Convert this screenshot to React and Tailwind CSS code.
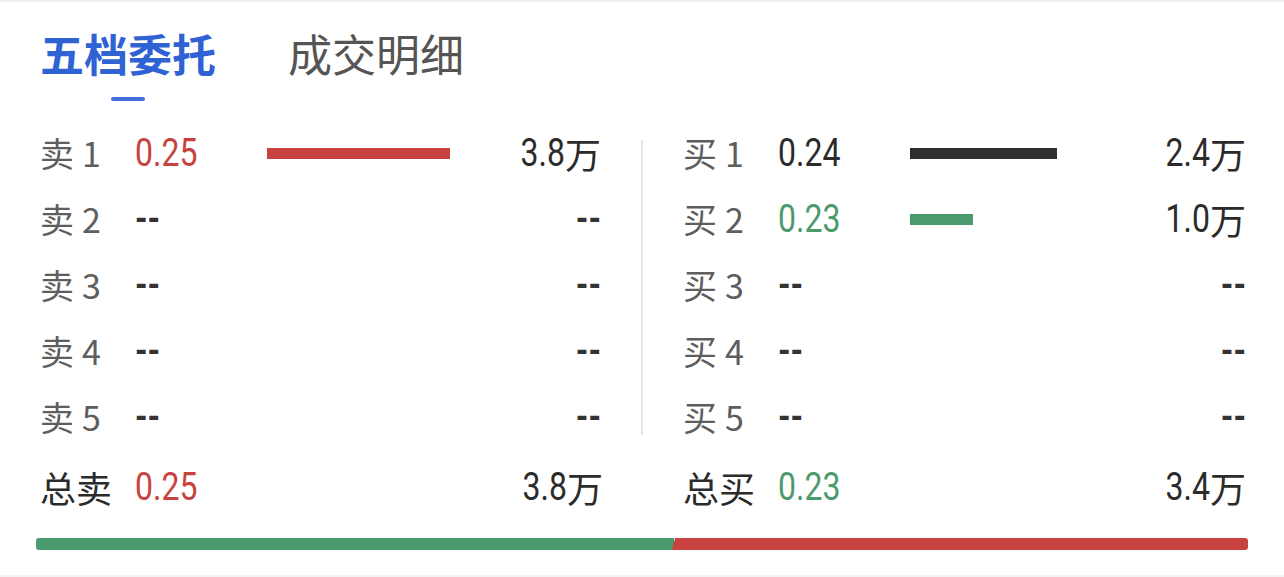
const RED = "text-[#c8423f]";
const GREEN = "text-[#4a9a6d]";

const sells = [
  { n: 1, price: "0.25", priceCls: RED, vol: "3.8", bar: 183, barCls: "bg-[#c8423f]" },
  { n: 2 },
  { n: 3 },
  { n: 4 },
  { n: 5 },
];

const buys = [
  { n: 1, price: "0.24", priceCls: "text-[#2b2b2b]", vol: "2.4", bar: 147, barCls: "bg-[#2e2e2e]" },
  { n: 2, price: "0.23", priceCls: GREEN, vol: "1.0", bar: 63, barCls: "bg-[#4a9a6d]" },
  { n: 3 },
  { n: 4 },
  { n: 5 },
];

// numbers in the picture use a narrow face; Roboto stretched vertically stands in for it
const NUM = "inline-block scale-y-[1.2] font-['Roboto','Noto_Sans_CJK_SC',sans-serif] text-[32px] leading-none";
const CJK = "font-['Noto_Sans_CJK_SC',sans-serif]";

const Dash = () => <span className={`${NUM} font-bold text-[#333]`}>--</span>;

const Volume = ({ vol }) =>
  vol ? (
    <span className="flex items-center text-[#2b2b2b]">
      <span className={NUM}>{vol}</span>
      <span className={`${CJK} text-[36px] leading-none`}>万</span>
    </span>
  ) : (
    <Dash />
  );

const Row = ({ side, row }) => (
  <div className="flex h-[66px] items-center">
    <div className={`${CJK} w-[95px] text-[34px] leading-none text-[#5e5e5e]`}>
      {side}
      <span className="ml-[8px]">{row.n}</span>
    </div>
    <div className="w-[132px]">
      {row.price ? <span className={`${NUM} ${row.priceCls}`}>{row.price}</span> : <Dash />}
    </div>
    <div className="flex-1">
      {row.bar && <div className={`h-[11px] ${row.barCls}`} style={{ width: row.bar }} />}
    </div>
    <Volume vol={row.vol} />
  </div>
);

const Total = ({ label, price, priceCls, vol }) => (
  <div className="flex flex-1 items-center">
    <div className={`${CJK} w-[95px] text-[36px] leading-none text-[#2b2b2b]`}>{label}</div>
    <span className={`${NUM} ${priceCls}`}>{price}</span>
    <div className="flex-1" />
    <Volume vol={vol} />
  </div>
);

export default function App() {
  return (
    <div className="flex h-[577px] w-[1284px] flex-col border-t-2 border-[#f2f2f2] bg-white">
      {/* tabs */}
      <div className="mt-[29px] flex gap-[72px] pl-[40px]">
        <div className="flex flex-col items-center">
          <span className={`${CJK} text-[44px] leading-[44px] font-bold text-[#2f62d3]`}>五档委托</span>
          <div className="mt-[22px] h-[4px] w-[34px] rounded-full bg-[#3f6fd8]" />
        </div>
        <span className={`${CJK} text-[44px] leading-[44px] text-[#555]`}>成交明细</span>
      </div>

      {/* order book */}
      <div className="mt-[19px] flex pl-[40px] pr-[38px]">
        <div className="w-[561px]">
          {sells.map((r) => (
            <Row key={r.n} side="卖" row={r} />
          ))}
        </div>
        <div className="mx-[40px] mt-[20px] mb-[15px] w-[2px] bg-[#e6e6e6]" />
        <div className="flex-1">
          {buys.map((r) => (
            <Row key={r.n} side="买" row={r} />
          ))}
        </div>
      </div>

      {/* totals */}
      <div className="flex h-[74px] pl-[40px] pr-[38px]">
        <div className="flex w-[563px]">
          <Total label="总卖" price="0.25" priceCls={RED} vol="3.8" />
        </div>
        <div className="w-[80px]" />
        <div className="flex flex-1">
          <Total label="总买" price="0.23" priceCls={GREEN} vol="3.4" />
        </div>
      </div>

      {/* ratio bar */}
      <div className="mx-[36px] mt-[14px] flex h-[12px] overflow-hidden rounded-[3px]">
        <div className="w-[638px] bg-[#4a9a6d]" />
        <div className="-ml-[2px] flex-1 bg-[#c8423f] [clip-path:polygon(3px_0,100%_0,100%_100%,0_100%)]" />
      </div>

      <div className="flex-1" />
      <div className="h-[2px] bg-[#f2f2f2]" />
    </div>
  );
}
